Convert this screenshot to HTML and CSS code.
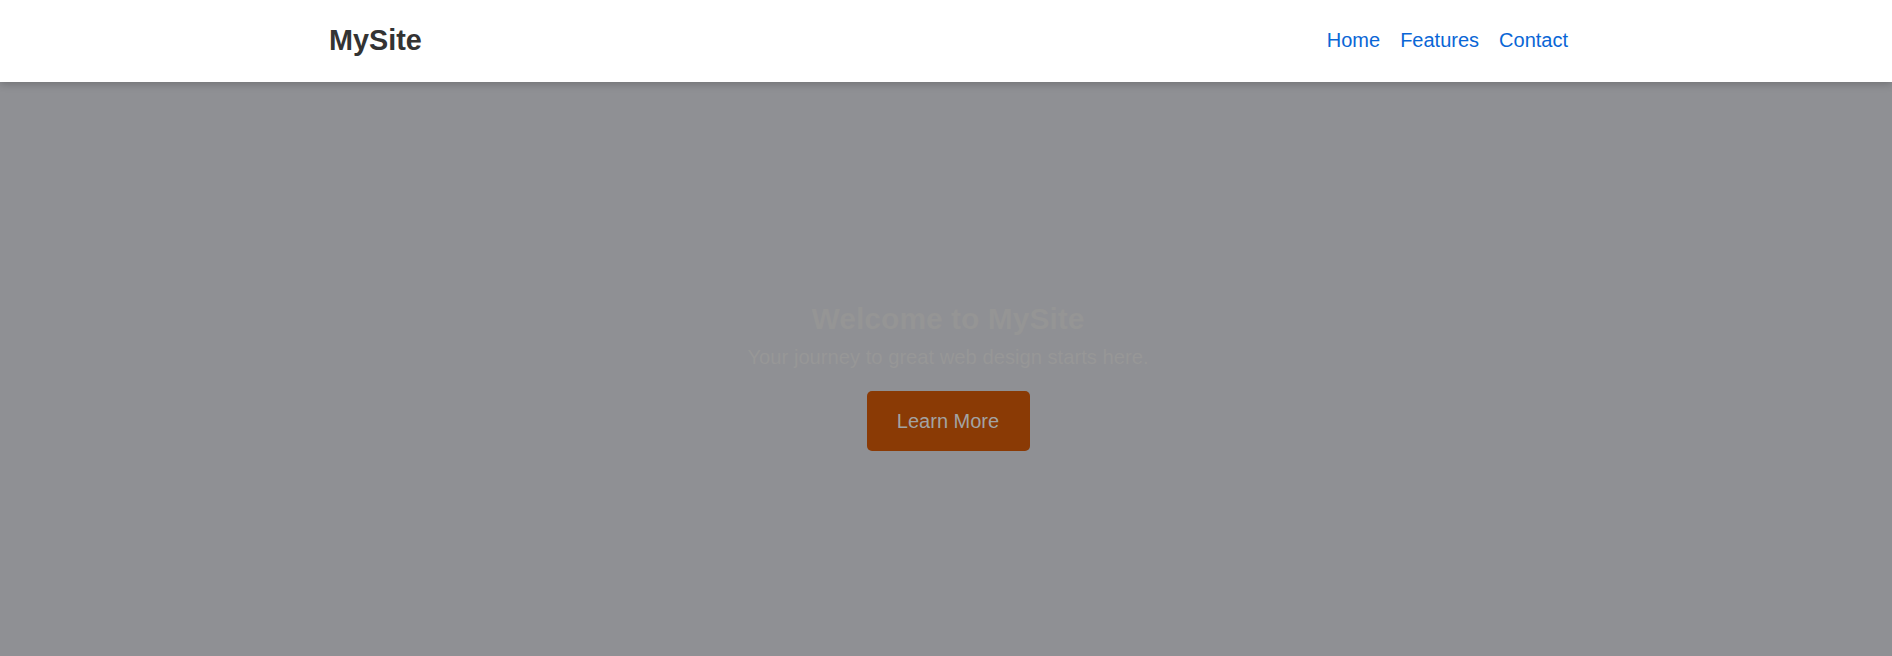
FILE: index.html
```html
<!DOCTYPE html>
<html lang="en">
<head>
<meta charset="utf-8">
<title>MySite</title>
<link rel="stylesheet" href="styles.css">
</head>
<body>
<header class="site-header">
  <div class="header-inner">
    <div class="logo">MySite</div>
    <nav class="nav">
      <a href="#" class="nav-link">Home</a>
      <a href="#" class="nav-link">Features</a>
      <a href="#" class="nav-link">Contact</a>
    </nav>
  </div>
</header>
<main class="hero">
  <h1 class="hero-title">Welcome to MySite</h1>
  <p class="hero-sub">Your journey to great web design starts here.</p>
  <a href="#" class="hero-btn">Learn More</a>
</main>
</body>
</html>
```
FILE: styles.css
```css
* { box-sizing: border-box; }
html, body {
  margin: 0;
  padding: 0;
  height: 100%;
  overflow: hidden;
}
body {
  font-family: "Liberation Sans", Arial, sans-serif;
  background: #8f9094;
}
.site-header {
  position: relative;
  z-index: 2;
  background: #ffffff;
  height: 82px;
  padding-bottom: 1px;
  box-shadow: 0 2px 8px rgba(0, 0, 0, 0.22);
  display: flex;
  align-items: center;
}
.header-inner {
  width: 1244px;
  margin: 0 auto;
  padding-left: 5px;
  display: flex;
  align-items: center;
  justify-content: space-between;
}
.logo {
  font-size: 28.8px;
  font-weight: bold;
  color: #333333;
}
.nav {
  display: flex;
  gap: 20px;
}
.nav-link {
  font-size: 20px;
  color: #0a66d6;
  text-decoration: none;
}
.hero {
  height: 574px;
  padding-top: 220px;
  padding-left: 4px;
  display: flex;
  flex-direction: column;
  align-items: center;
  background: #8f9094;
}
.hero-title {
  margin: 0 0 10px;
  font-size: 30px;
  font-weight: bold;
  color: #959595;
}
.hero-sub {
  margin: 0 0 22px;
  font-size: 20.2px;
  color: #979797;
}
.hero-btn {
  display: flex;
  align-items: center;
  justify-content: center;
  width: 163px;
  height: 60px;
  padding-top: 1px;
  background: #8a3a05;
  color: #a3a3a3;
  font-size: 20px;
  text-decoration: none;
  border-radius: 5px;
}
```
